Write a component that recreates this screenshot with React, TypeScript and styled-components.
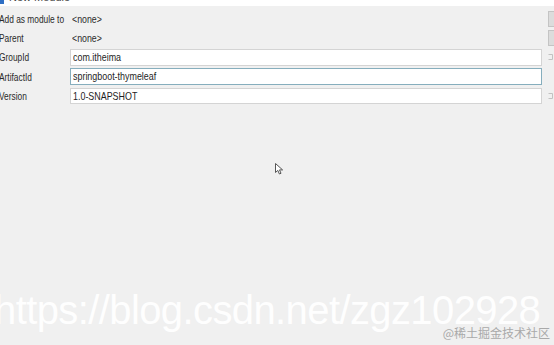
import * as React from 'react';
import styled, {createGlobalStyle} from "styled-components";

const GlobalStyle = createGlobalStyle`
    html, body {
        margin: 0;
        padding: 0;
        height: 100%;
        background: #f0f0f0;
        overflow: hidden;
    }
    #root {
        height: 100%;
    }
`

type Row = {label: string; value: string; kind: "plain" | "field"; focused?: boolean; side?: "button" | "mark"};

const rows: Row[] = [
    {label: "Add as module to", value: "<none>", kind: "plain", side: "button"},
    {label: "Parent", value: "<none>", kind: "plain", side: "button"},
    {label: "GroupId", value: "com.itheima", kind: "field", side: "mark"},
    {label: "ArtifactId", value: "springboot-thymeleaf", kind: "field", focused: true},
    {label: "Version", value: "1.0-SNAPSHOT", kind: "field", side: "mark"},
];

export default function App() {
    return (
        <Page>
            <GlobalStyle/>
            <TitleBar>
                <TitleIcon/>
                <TitleText>New Module</TitleText>
            </TitleBar>
            <Form>
                {rows.map((r) => (
                    <FormRow key={r.label}>
                        <Label><Squeeze $x={0.76}>{r.label}</Squeeze></Label>
                        {r.kind === "field" ? (
                            <Field $focused={r.focused}><Squeeze $x={0.81}>{r.value}</Squeeze></Field>
                        ) : (
                            <Plain><Squeeze $x={0.8}>{r.value}</Squeeze></Plain>
                        )}
                        <span/>
                        <SideCell>
                            {r.side === "button" && <SideButton/>}
                            {r.side === "mark" && (
                                <svg width="6" height="8" viewBox="0 0 6 8">
                                    <path d="M0.5 1.5 H4.5 V6.5 H0.5" fill="none" stroke="#c2c2c2" strokeWidth="1"/>
                                </svg>
                            )}
                        </SideCell>
                    </FormRow>
                ))}
            </Form>
            <Pointer width="9" height="12" viewBox="0 0 9 12">
                <path d="M0.5 0.5 L0.5 9.5 L2.8 7.4 L4.4 11 L6 10.3 L4.5 6.9 L7.6 6.9 Z" fill="#fff" stroke="#555" strokeWidth="1" strokeLinejoin="round"/>
            </Pointer>
            <Watermark>https://blog.csdn.net/zgz102928</Watermark>
            <Credit>@稀土掘金技术社区</Credit>
        </Page>
    );
}

const Page = styled.div`
    position: relative;
    height: 345px;
    width: 554px;
    overflow: hidden;
    background: #f0f0f0;
    font-family: "Liberation Sans", Arial, sans-serif;
    color: #1e1e1e;
`
const TitleBar = styled.div`
    height: 6px;
    background: #ffffff;
    display: flex;
    align-items: flex-end;
    gap: 5px;
    overflow: hidden;
`
const TitleIcon = styled.div`
    width: 4px;
    height: 5px;
    margin-bottom: 2px;
    background: #2f6fc4;
`
const TitleText = styled.span`
    font-size: 11px;
    line-height: 11px;
    margin-bottom: 3px;
    color: #444;
`
const Form = styled.div`
    padding-top: 3.2px;
    display: flex;
    flex-direction: column;
`
const FormRow = styled.div`
    display: grid;
    grid-template-columns: 70px 472px 6px 1fr;
    align-items: center;
    height: 19.3px;
`
const Squeeze = styled.span<{ $x: number }>`
    display: inline-block;
    white-space: nowrap;
    transform: scaleX(${p => p.$x});
    transform-origin: left center;
`
const Label = styled.div`
    font-size: 11px;
    margin-left: -1px;
    white-space: nowrap;
    overflow: visible;
    color: #2a2a2a;
`
const Plain = styled.div`
    font-size: 11px;
    padding-left: 2px;
    color: #2a2a2a;
`
const Field = styled.div<{ $focused?: boolean }>`
    box-sizing: border-box;
    height: 16.5px;
    background: #ffffff;
    border: 1px solid ${p => p.$focused ? "#86aebd" : "#d4d4d4"};
    font-size: 11px;
    line-height: 14px;
    padding-left: 2px;
    color: #1e1e1e;
`
const SideCell = styled.div`
    display: flex;
    align-items: center;
`
const SideButton = styled.div`
    box-sizing: border-box;
    width: 12px;
    height: 16px;
    background: #dcdcdc;
    border: 1px solid #c4c4c4;
`
const Pointer = styled.svg`
    position: absolute;
    left: 275px;
    top: 163px;
`
const Watermark = styled.div`
    position: absolute;
    left: -6px;
    top: 290px;
    font-size: 40px;
    line-height: 40px;
    letter-spacing: -0.6px;
    white-space: nowrap;
    color: rgba(255, 255, 255, 0.95);
`
const Credit = styled.div`
    position: absolute;
    right: 4px;
    top: 326px;
    font-family: "Noto Sans CJK SC", sans-serif;
    font-size: 12px;
    line-height: 14px;
    color: #a9a9a9;
    white-space: nowrap;
`
